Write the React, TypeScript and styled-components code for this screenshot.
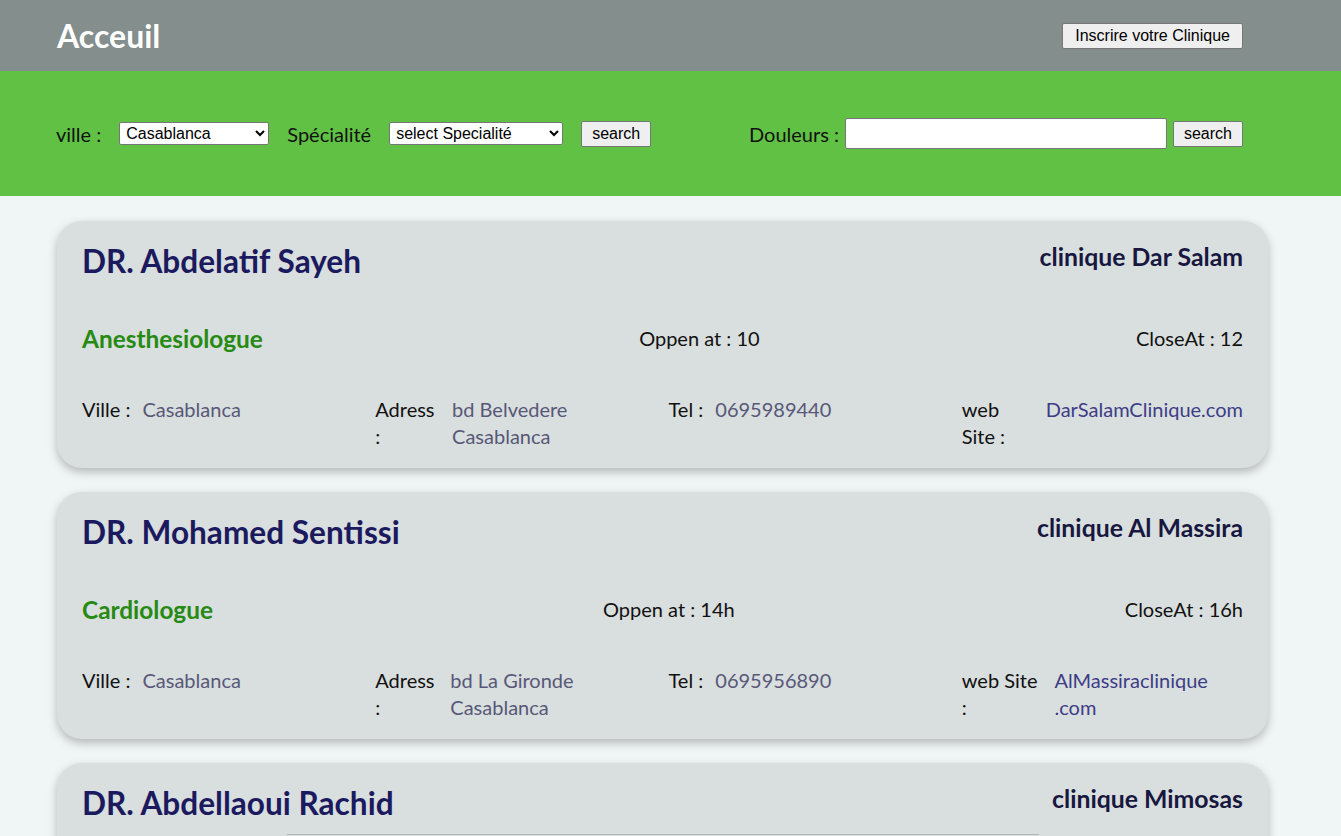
import React from "react";
import styled, { createGlobalStyle } from "styled-components";

const GlobalStyle = createGlobalStyle`
  html, body {
    margin: 0;
    padding: 0;
    background: #f0f5f5;
    font-family: "Lato", "Open Sans", sans-serif;
    scrollbar-width: none;
  }
  ::-webkit-scrollbar { display: none; }
  * { box-sizing: border-box; }
`;

const Page = styled.div`
  min-height: 836px;
  background: #f0f5f5;
`;

const TopBar = styled.header`
  height: 71px;
  background: #838e8d;
  display: flex;
  align-items: center;
  justify-content: space-between;
  padding: 0 98px 0 57px;
`;

const Brand = styled.h1`
  margin: 0;
  color: #ffffff;
  font-size: 32px;
  font-weight: 700;
`;

const NativeButton = styled.button<{ $padX?: number }>`
  font-family: "Liberation Sans", Arial, sans-serif;
  font-size: 16px;
  color: #000;
  background: #efefef;
  border: 1px solid #767676;
  border-radius: 2px;
  padding: 2px ${(p) => p.$padX ?? 11}px;
  line-height: 20px;
  cursor: pointer;
`;

const FilterBar = styled.section`
  height: 125px;
  background: #60c144;
  display: flex;
  align-items: center;
  justify-content: space-between;
  padding: 0 98px 0 56px;
`;

const FilterGroup = styled.div<{ $gap: number }>`
  display: flex;
  align-items: center;
  gap: ${(p) => p.$gap}px;
`;

const FilterLabel = styled.label`
  font-size: 20px;
  color: #111;
`;

const Select = styled.select<{ $width: number }>`
  width: ${(p) => p.$width}px;
  height: 23px;
  font-family: "Liberation Sans", Arial, sans-serif;
  font-size: 16px;
  color: #000;
  background: #fff;
  border: 1px solid #767676;
  border-radius: 2px;
  padding: 0 2px;
`;

const TextInput = styled.input`
  width: 322px;
  height: 31px;
  background: #fff;
  border: 1px solid #767676;
  border-radius: 2px;
  font-size: 16px;
`;

const List = styled.main`
  display: flex;
  flex-direction: column;
  gap: 24px;
  padding: 25px 0 0 57px;
  width: 1268px;
`;

const Card = styled.article`
  background: #d9dede;
  border-radius: 25px;
  box-shadow: 0 4px 10px rgba(0, 0, 0, 0.25);
  padding: 20px 25px 18px;
  overflow: hidden;
`;

const CardHead = styled.div`
  display: flex;
  justify-content: space-between;
  align-items: flex-start;
`;

const DoctorName = styled.h2`
  margin: 0;
  font-size: 31.6px;
  line-height: 40px;
  font-weight: 700;
  color: #1c1a5e;
`;

const ClinicName = styled.h3`
  margin: 0;
  font-size: 24.8px;
  line-height: 31px;
  font-weight: 700;
  color: #17173f;
`;

const Divider = styled.hr`
  width: 752px;
  margin: 11px auto 0;
  border: 0;
  border-top: 1px solid #b1b5b5;
`;

const HoursRow = styled.div`
  margin-top: 42px;
  display: flex;
  justify-content: space-between;
  align-items: center;
  font-size: 20px;
  line-height: 31px;
  color: #111;
`;

const Speciality = styled.h3`
  margin: 0;
  font-size: 24.4px;
  line-height: 31px;
  font-weight: 700;
  color: #268a13;
`;

const InfoGrid = styled.div`
  margin-top: 42px;
  display: grid;
  grid-template-columns: repeat(4, 1fr);
  column-gap: 12px;
  font-size: 20px;
  line-height: 27px;
`;

const InfoItem = styled.div`
  display: flex;
  align-items: flex-start;
`;

const InfoLabel = styled.span`
  color: #111;
  margin-right: 12px;
`;

const InfoValue = styled.span<{ $link?: boolean }>`
  color: ${(p) => (p.$link ? "#3d3d87" : "#585878")};
`;

type Doctor = {
  name: string;
  clinic: string;
  speciality: string;
  open: string;
  close: string;
  city: string;
  address: string;
  tel: string;
  site: string;
  divider?: boolean;
};

const doctors: Doctor[] = [
  {
    name: "DR. Abdelatif Sayeh",
    clinic: "clinique Dar Salam",
    speciality: "Anesthesiologue",
    open: "10",
    close: "12",
    city: "Casablanca",
    address: "bd Belvedere Casablanca",
    tel: "0695989440",
    site: "DarSalamClinique.com",
  },
  {
    name: "DR. Mohamed Sentissi",
    clinic: "clinique Al Massira",
    speciality: "Cardiologue",
    open: "14h",
    close: "16h",
    city: "Casablanca",
    address: "bd La Gironde Casablanca",
    tel: "0695956890",
    site: "AlMassiraclinique .com",
  },
  {
    name: "DR. Abdellaoui Rachid",
    clinic: "clinique Mimosas",
    speciality: "Dermatologue",
    open: "9h",
    close: "18h",
    city: "Casablanca",
    address: "bd Zerktouni Casablanca",
    tel: "0695912345",
    site: "Mimosasclinique.com",
    divider: true,
  },
];

function DoctorCard({ d }: { d: Doctor }) {
  return (
    <Card>
      <CardHead>
        <DoctorName>{d.name}</DoctorName>
        <ClinicName>{d.clinic}</ClinicName>
      </CardHead>
      {d.divider && <Divider />}
      <HoursRow>
        <Speciality>{d.speciality}</Speciality>
        <span>Oppen at : {d.open}</span>
        <span>CloseAt : {d.close}</span>
      </HoursRow>
      <InfoGrid>
        <InfoItem>
          <InfoLabel>Ville :</InfoLabel>
          <InfoValue>{d.city}</InfoValue>
        </InfoItem>
        <InfoItem>
          <InfoLabel>Adress :</InfoLabel>
          <InfoValue>{d.address}</InfoValue>
        </InfoItem>
        <InfoItem>
          <InfoLabel>Tel :</InfoLabel>
          <InfoValue>{d.tel}</InfoValue>
        </InfoItem>
        <InfoItem>
          <InfoLabel>web Site :</InfoLabel>
          <InfoValue $link>{d.site}</InfoValue>
        </InfoItem>
      </InfoGrid>
    </Card>
  );
}

export default function App() {
  return (
    <Page>
      <GlobalStyle />
      <TopBar>
        <Brand>Acceuil</Brand>
        <NativeButton $padX={12}>Inscrire votre Clinique</NativeButton>
      </TopBar>
      <FilterBar>
        <FilterGroup $gap={18}>
          <FilterLabel>ville :</FilterLabel>
          <Select $width={150} defaultValue="Casablanca">
            <option>Casablanca</option>
            <option>Rabat</option>
            <option>Marrakech</option>
          </Select>
          <FilterLabel>Spécialité</FilterLabel>
          <Select $width={174} defaultValue="select Specialité">
            <option>select Specialité</option>
            <option>Cardiologue</option>
            <option>Anesthesiologue</option>
          </Select>
          <NativeButton $padX={10}>search</NativeButton>
        </FilterGroup>
        <FilterGroup $gap={6}>
          <FilterLabel>Douleurs :</FilterLabel>
          <TextInput type="text" />
          <NativeButton $padX={10}>search</NativeButton>
        </FilterGroup>
      </FilterBar>
      <List>
        {doctors.map((d) => (
          <DoctorCard key={d.name} d={d} />
        ))}
      </List>
    </Page>
  );
}
